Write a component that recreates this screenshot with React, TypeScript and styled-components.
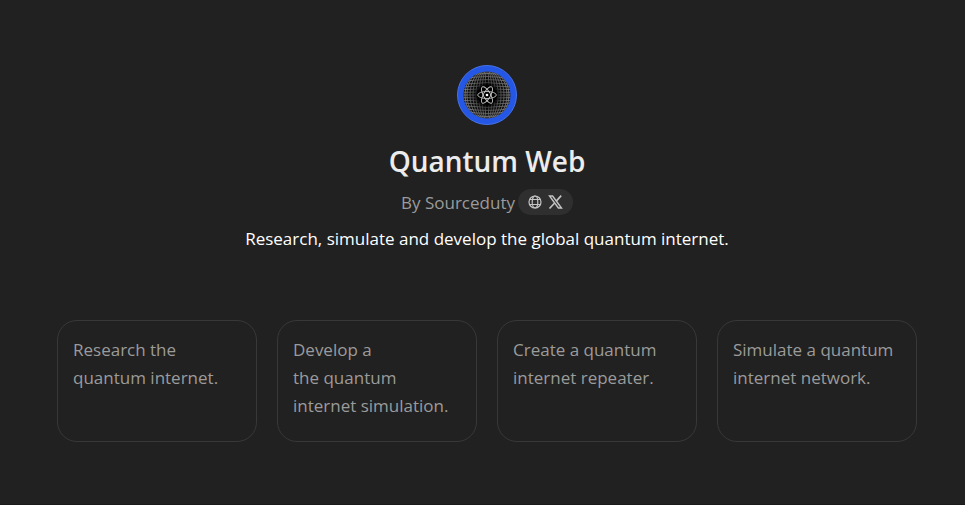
import React from 'react';
import styled, { createGlobalStyle } from 'styled-components';

const GlobalStyle = createGlobalStyle`
  *, *::before, *::after { box-sizing: border-box; }
  body {
    margin: 0;
    background: #212121;
    color: #ececec;
    font-family: 'Segoe UI', 'Open Sans', 'Noto Sans', sans-serif;
  }
`;

const Page = styled.main`
  display: flex;
  flex-direction: column;
  align-items: center;
  min-height: 100vh;
  padding: 65px 48px 32px 57px;
  border-bottom: 1px solid #1a1a1a;
`;

const Avatar = styled.svg`
  display: block;
  width: 60px;
  height: 60px;
`;

const Title = styled.h1`
  margin: 16px 0 0;
  font-size: 28px;
  line-height: 40px;
  font-weight: 600;
`;

const Byline = styled.div`
  display: flex;
  align-items: flex-start;
  gap: 3px;
  margin-top: 8px;
  color: #9b9b9b;
  font-size: 17px;
  line-height: 28px;
`;

const Links = styled.nav`
  display: flex;
  align-items: center;
  gap: 6px;
  height: 26px;
  padding: 0 10px;
  border-radius: 13px;
  background: #2f2f2f;
`;

const IconLink = styled.a`
  display: flex;
  color: #c4c4c4;
`;

const Description = styled.p`
  margin: 8px 0 0;
  color: #ffffff;
  font-size: 17px;
  line-height: 28px;
  text-align: center;
`;

const Prompts = styled.div`
  display: grid;
  grid-template-columns: repeat(4, minmax(0, 1fr));
  gap: 20px;
  width: 100%;
  margin-top: 67px;
`;

const Prompt = styled.button`
  display: flex;
  align-items: flex-start;
  min-height: 122px;
  padding: 15px;
  border: 1px solid #383838;
  border-radius: 20px;
  background: transparent;
  color: #9b9b9b;
  font: inherit;
  font-size: 17px;
  line-height: 28px;
  text-align: left;
  white-space: pre-line;
  cursor: pointer;
`;

const prompts = [
  'Research the\nquantum internet.',
  'Develop a\nthe quantum\ninternet simulation.',
  'Create a quantum\ninternet repeater.',
  'Simulate a quantum\ninternet network.',
];

const meridians = [2, 5, 8, 11, 14, 17, 20, 22];
const parallels = [-21, -18, -15, -12, -9, -6, -3, 0, 3, 6, 9, 12, 15, 18, 21];

function QuantumLogo() {
  return (
    <Avatar viewBox="0 0 60 60" role="img" aria-label="Quantum Web logo">
      <defs>
        <radialGradient id="shade">
          <stop offset="0" stopColor="#000" />
          <stop offset="0.4" stopColor="#000" />
          <stop offset="0.55" stopColor="#000" stopOpacity="0.4" />
          <stop offset="1" stopColor="#000" stopOpacity="0" />
        </radialGradient>
        <clipPath id="sphere">
          <circle cx="30" cy="30" r="23.5" />
        </clipPath>
      </defs>
      <circle cx="30" cy="30" r="29.5" fill="#2457e6" stroke="#4673e8" />
      <circle cx="30" cy="30" r="23.5" fill="#0c0c0c" />
      <g clipPath="url(#sphere)" fill="none" stroke="#b4b4b4" strokeWidth="0.8" opacity="0.75">
        {meridians.map((r) => (
          <ellipse key={r} cx="30" cy="30" rx={r} ry={26} />
        ))}
        {parallels.map((y) => (
          <path key={y} d={`M6 ${30 + y * 0.9}Q30 ${30 + y * 1.15} 54 ${30 + y * 0.9}`} />
        ))}
      </g>
      <circle cx="30" cy="30" r="23.5" fill="url(#shade)" />
      <g fill="none" stroke="#c8c8c8" strokeWidth="0.9">
        {[0, 60, 120].map((angle) => (
          <ellipse key={angle} cx="30" cy="30" rx="9.3" ry="3.5" transform={`rotate(${angle} 30 30)`} />
        ))}
      </g>
      <circle cx="30" cy="30" r="2.8" fill="#000" />
      <circle cx="30" cy="30" r="1.3" fill="#fff" />
    </Avatar>
  );
}

function GlobeIcon() {
  return (
    <svg width="14" height="14" viewBox="0 0 14 14" fill="none" stroke="currentColor" strokeWidth="1.2" aria-hidden="true">
      <circle cx="7" cy="7" r="6" />
      <ellipse cx="7" cy="7" rx="2.8" ry="6" />
      <path d="M1.4 4.5h11.2M1.4 9.5h11.2" />
    </svg>
  );
}

function XIcon() {
  return (
    <svg width="15" height="14" viewBox="0 0 15 14" fill="none" stroke="currentColor" aria-hidden="true">
      <path d="M1.5 1h3.1l8.9 12h-3.1z" strokeWidth="1.4" />
      <path d="M13.2.6 8.5 5.9M6.4 8.2 1.5 13.5" strokeWidth="1.6" />
    </svg>
  );
}

export default function App() {
  return (
    <>
      <GlobalStyle />
      <Page>
        <QuantumLogo />
        <Title>Quantum Web</Title>
        <Byline>
          <span>By Sourceduty</span>
          <Links aria-label="Creator links">
            <IconLink href="#website" aria-label="Website"><GlobeIcon /></IconLink>
            <IconLink href="#x" aria-label="X"><XIcon /></IconLink>
          </Links>
        </Byline>
        <Description>Research, simulate and develop the global quantum internet.</Description>
        <Prompts>
          {prompts.map((text) => (
            <Prompt key={text} type="button">{text}</Prompt>
          ))}
        </Prompts>
      </Page>
    </>
  );
}
